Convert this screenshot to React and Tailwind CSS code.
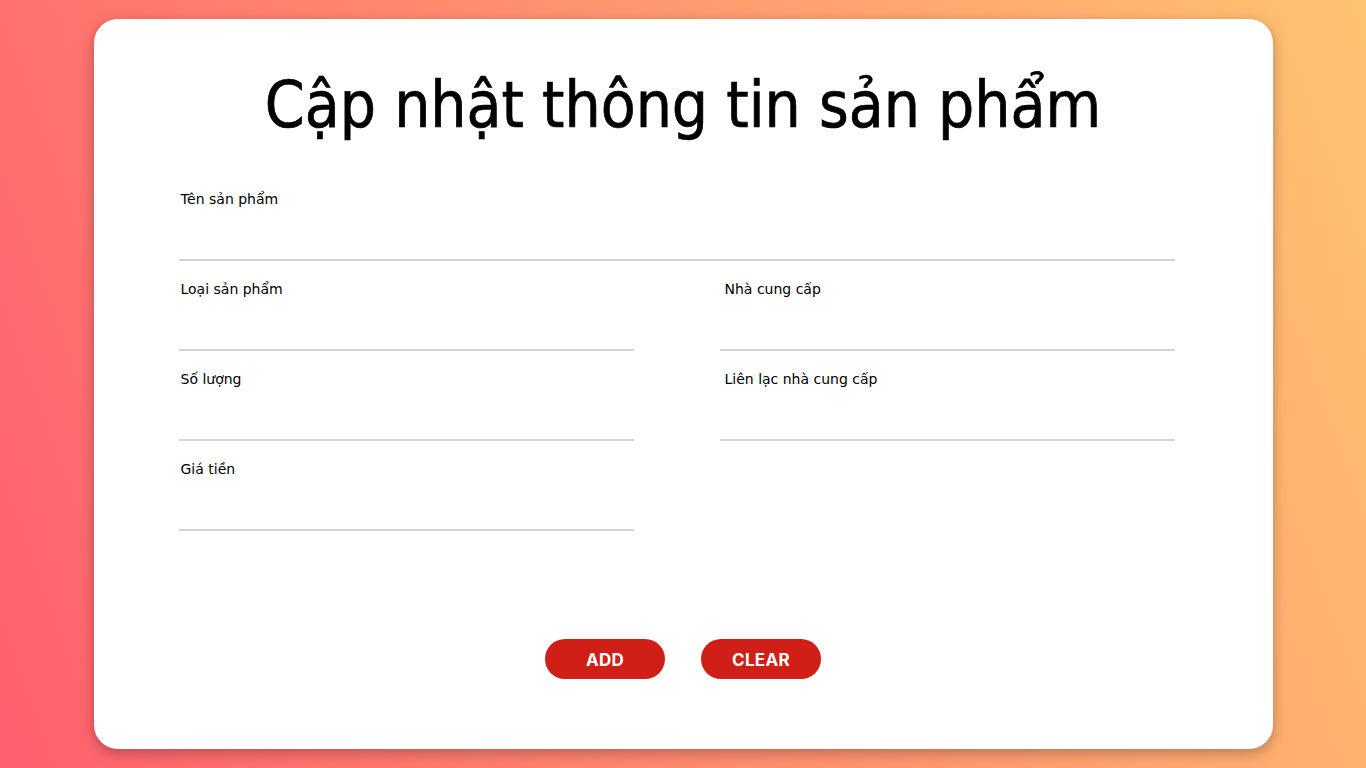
import React, { useState } from 'react';

const Field = ({ label, value, onChange, shift = false }) => (
    <label className="flex flex-col h-[70px]">
        <span className={`h-[17px] text-[14px] leading-[17px] text-black ${shift ? 'pl-[5px]' : 'pl-0.5'}`}>{label}</span>
        <input
            value={value}
            onChange={onChange}
            className="flex-1 w-full bg-transparent border-b-2 border-[#d4d4d4] outline-none text-[14px] px-1"
        />
    </label>
);

const App = () => {
    const empty = { name: '', type: '', supplier: '', qty: '', contact: '', price: '' };
    const [form, setForm] = useState(empty);

    const set = (key) => (e) => setForm({ ...form, [key]: e.target.value });

    return (
        <div className="w-full h-screen flex items-center justify-center bg-[linear-gradient(70deg,#ff5f6d,#ffc371)] font-['DejaVu_Sans',sans-serif]">
            <div className="w-[1179px] h-[730px] bg-white rounded-[24px] shadow-[0_4px_14px_rgba(0,0,0,0.28)] flex flex-col">
                {/* Title */}
                <h1 className="mt-[55px] h-[63px] text-center text-[63.5px] leading-[63px] text-black [-webkit-text-stroke:0.7px_black] font-['DejaVu_Sans_Condensed','DejaVu_Sans',sans-serif]">Cập nhật thông tin sản phẩm</h1>

                {/* Form */}
                <div className="mt-[54px] ml-[85px] w-[996px] flex flex-col gap-[20px]">
                    <Field label="Tên sản phẩm" value={form.name} onChange={set('name')} />
                    <div className="grid grid-cols-2 gap-x-[86px] gap-y-[20px]">
                        <Field label="Loại sản phẩm" value={form.type} onChange={set('type')} />
                        <Field label="Nhà cung cấp" value={form.supplier} onChange={set('supplier')} shift />
                        <Field label="Số lượng" value={form.qty} onChange={set('qty')} />
                        <Field label="Liên lạc nhà cung cấp" value={form.contact} onChange={set('contact')} shift />
                        <Field label="Giá tiền" value={form.price} onChange={set('price')} />
                    </div>
                </div>

                {/* Actions */}
                <div className="mt-[108px] flex justify-center gap-9 font-['Inter',sans-serif]">
                    <button className="w-[120px] h-10 pt-1 rounded-full bg-[#d01f16] text-white text-[17px] font-bold tracking-[0.3px]">ADD</button>
                    <button onClick={() => setForm(empty)} className="w-[120px] h-10 pt-1 rounded-full bg-[#d01f16] text-white text-[17px] font-bold tracking-[0.3px]">CLEAR</button>
                </div>
            </div>
        </div>
    );
};

export default App;
